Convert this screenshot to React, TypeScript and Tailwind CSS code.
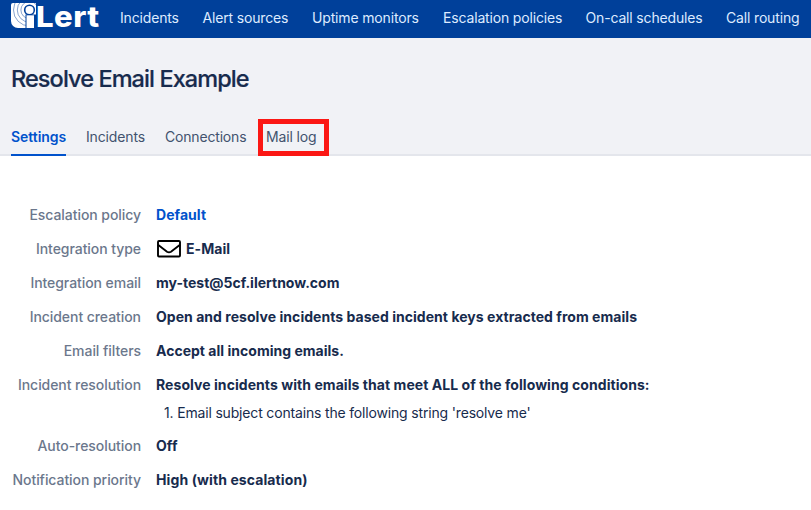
import { ReactNode } from "react";

const nav: { label: string; cls: string }[] = [
  { label: "Incidents", cls: "w-[58.5px]" },
  { label: "Alert sources", cls: "w-[85.5px]" },
  { label: "Uptime monitors", cls: "w-[107px]" },
  { label: "Escalation policies", cls: "w-[118.5px]" },
  { label: "On-call schedules", cls: "w-[116.5px]" },
  { label: "Call routing", cls: "w-[74px]" },
];

const tabs: { label: string; cls: string }[] = [
  { label: "Settings", cls: "w-[55px] font-semibold tracking-[-0.05px] text-[#0052cc] border-[#0052cc]" },
  { label: "Incidents", cls: "w-[59px] tracking-[-0.15px] text-[#42526e] border-transparent" },
  { label: "Connections", cls: "w-[81px] tracking-[-0.18px] text-[#42526e] border-transparent" },
  { label: "Mail log", cls: "w-[50px] tracking-[-0.15px] text-[#42526e] border-transparent" },
];

function Logo() {
  return (
    <div className="flex h-[38px] w-[89px] items-start">
      <svg className="mt-[3px] shrink-0" width="25" height="25" viewBox="0 0 25 25" fill="none">
        <clipPath id="tile">
          <path d="M2 0H25V25H7A7 7 0 0 1 0 18V2A2 2 0 0 1 2 0Z" />
        </clipPath>
        <g clipPath="url(#tile)">
          <rect width="25" height="25" fill="#fff" />
          <g stroke="#00409a" strokeOpacity="0.6" strokeWidth="0.8">
            <circle cx="18.5" cy="7" r="8.6" />
            <circle cx="18.5" cy="7" r="12.2" />
            <circle cx="18.5" cy="7" r="16" />
          </g>
          <path d="M14.5 11.5H25V25H14.5Z" fill="#00409a" />
          <circle cx="18.5" cy="7" r="5.6" fill="#00409a" />
        </g>
        <circle cx="18.5" cy="7" r="4" fill="#fff" />
        <path d="M15.5 12.3H23V25H15.5Z" fill="#fff" />
      </svg>
      <span className="-ml-[0.5px] origin-left scale-x-[1.11] font-[Inter,sans-serif] text-[28px] leading-[34px] font-extrabold tracking-[0.4px] text-white">Lert</span>
    </div>
  );
}

function Row({ label, children }: { label: string; children: ReactNode }) {
  return (
    <div className="flex gap-[15px]">
      <dt className="w-[141px] shrink-0 text-right font-medium tracking-[-0.06px] whitespace-nowrap text-[#6b778c]">{label}</dt>
      <dd className="font-bold tracking-[0.05px] whitespace-nowrap">{children}</dd>
    </div>
  );
}

export default function App() {
  return (
    <div className="h-[510px] w-[811px] overflow-hidden bg-white font-[Inter,sans-serif] text-[14px] leading-5 text-[#172b4d]">
      <header className="flex h-[38px] bg-[#00409a] pl-[11px]">
        <Logo />
        <nav className="ml-[20px] flex gap-6 pt-2 tracking-[-0.16px] text-[#deebff]">
          {nav.map((n) => (
            <a key={n.label} className={"shrink-0 whitespace-nowrap " + n.cls}>{n.label}</a>
          ))}
        </nav>
      </header>
      <section className="h-[118px] border-b-2 border-[#e4e6ec] bg-[#f1f2f6] px-[11px] pt-[27px]">
        <h1 className="h-7 text-[23.5px] leading-7 font-medium tracking-[-0.92px] [-webkit-text-stroke:0.2px_#172b4d]">Resolve Email Example</h1>
        <div className="mt-[34px] flex h-[29px] gap-5">
          {tabs.map((t) => (
            <div key={t.label} className={"relative h-[29px] shrink-0 border-b-2 whitespace-nowrap " + t.cls}>
              {t.label}
              {t.label === "Mail log" && (
                <span className="absolute -top-[8px] -left-[8px] h-[37px] w-[71px] border-[5px] border-[#fb1714]" />
              )}
            </div>
          ))}
        </div>
      </section>
      <dl className="flex flex-col gap-[14px] pt-[49px]">
        <Row label="Escalation policy"><span className="text-[#0052cc]">Default</span></Row>
        <Row label="Integration type">
          <span className="flex items-center gap-[5px]">
            <svg width="25" height="20" viewBox="0 0 25 20" fill="none" stroke="#000" strokeWidth="1.9">
              <rect x="2" y="2" width="22" height="15.5" rx="1" />
              <path d="M2 5.8L11 12.7Q13 14 15 12.7L24 5.8" />
            </svg>
            E-Mail
          </span>
        </Row>
        <Row label="Integration email"><span className="tracking-normal">my-test@5cf.ilertnow.com</span></Row>
        <Row label="Incident creation"><span className="tracking-[0.04px]">Open and resolve incidents based incident keys extracted from emails</span></Row>
        <Row label="Email filters"><span className="tracking-[0.02px]">Accept all incoming emails.</span></Row>
        <Row label="Incident resolution">
          <span className="tracking-[0.06px]">Resolve incidents with emails that meet ALL of the following conditions:</span>
          <div className="mt-2 -mb-[1px] pl-2 font-normal tracking-[-0.17px]">1. Email subject contains the following string 'resolve me'</div>
        </Row>
        <Row label="Auto-resolution">Off</Row>
        <Row label="Notification priority"><span className="tracking-[0.1px]">High (with escalation)</span></Row>
      </dl>
    </div>
  );
}
